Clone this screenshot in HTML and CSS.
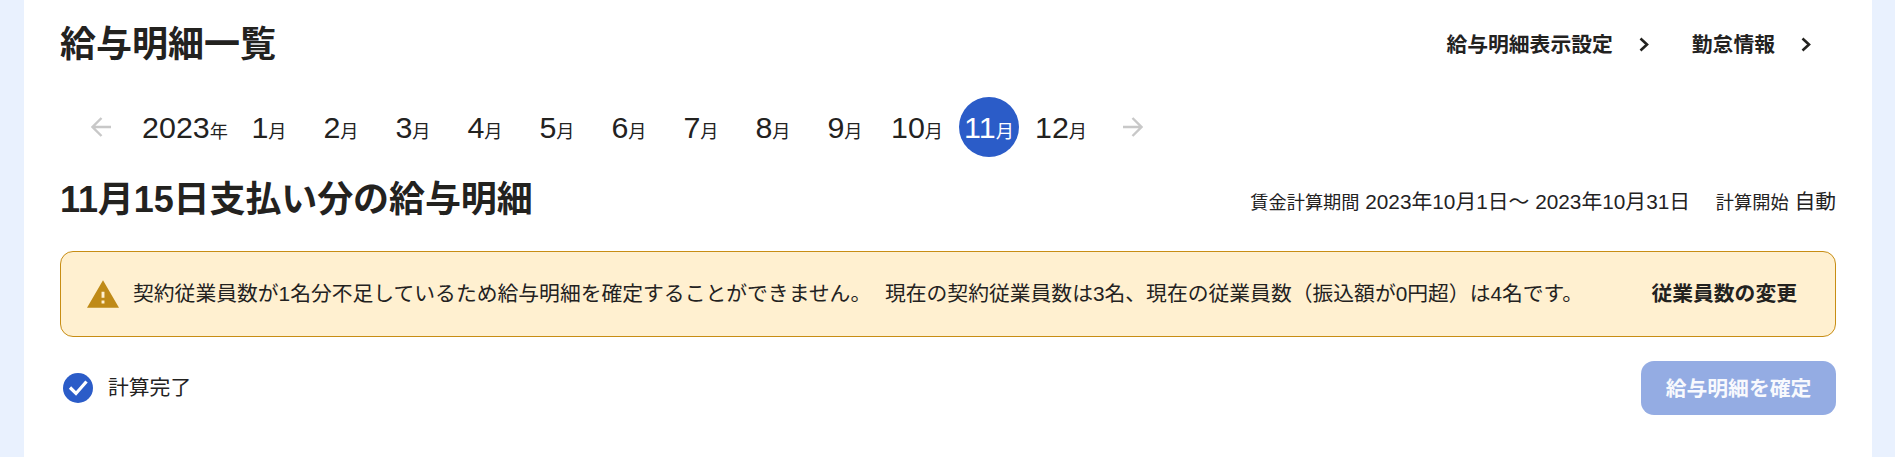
FILE: index.html
```html
<!DOCTYPE html>
<html lang="ja">
<head>
<meta charset="utf-8">
<title>給与明細一覧</title>
<link rel="stylesheet" href="styles.css">
</head>
<body>
<main class="panel">
  <header class="page-head">
    <h1 class="page-title">給与明細一覧</h1>
    <nav class="links">
      <a class="link">給与明細表示設定<svg class="chev" viewBox="0 0 10 15"><path d="M1.500 1.500 8 7.500l-6.500 6"/></svg></a>
      <a class="link">勤怠情報<svg class="chev" viewBox="0 0 10 15"><path d="M1.500 1.500 8 7.500l-6.500 6"/></svg></a>
    </nav>
  </header>
  <div class="months">
    <span class="cell"><svg class="arrow" viewBox="0 0 20 20"><path d="M20 10H1.500M10.500 1l-9 9 9 9"/></svg></span>
    <span class="year">2023<small>年</small></span>
    <span class="cell">1<small>月</small></span>
    <span class="cell">2<small>月</small></span>
    <span class="cell">3<small>月</small></span>
    <span class="cell">4<small>月</small></span>
    <span class="cell">5<small>月</small></span>
    <span class="cell">6<small>月</small></span>
    <span class="cell">7<small>月</small></span>
    <span class="cell">8<small>月</small></span>
    <span class="cell">9<small>月</small></span>
    <span class="cell">10<small>月</small></span>
    <span class="cell current">11<small>月</small></span>
    <span class="cell">12<small>月</small></span>
    <span class="cell"><svg class="arrow" viewBox="0 0 20 20"><path d="M0 10h18.500M9.500 1l9 9-9 9"/></svg></span>
  </div>
  <section class="summary">
    <h2 class="summary-title">11月15日支払い分の給与明細</h2>
    <p class="period">
      <small>賃金計算期間</small> 2023年10月1日～ 2023年10月31日
      <small class="start">計算開始</small> 自動
    </p>
  </section>
  <div class="alert">
    <svg class="warn" viewBox="1 2 22 19"><path d="M1 21h22L12 2 1 21zm12-3h-2v-2h2v2zm0-4h-2v-4h2v4z"/></svg>
    <p class="alert-text">契約従業員数が1名分不足しているため給与明細を確定することができません。 現在の契約従業員数は3名、現在の従業員数（振込額が0円超）は4名です。</p>
    <a class="alert-action">従業員数の変更</a>
  </div>
  <div class="status-row">
    <div class="status">
      <svg class="check" viewBox="0 0 30 30"><circle cx="15" cy="15" r="15"/><path d="m7 14.500 6 6L23.500 8.500"/></svg>
      <span class="status-label">計算完了</span>
    </div>
    <button class="confirm" type="button">給与明細を確定</button>
  </div>
</main>
</body>
</html>
```
FILE: styles.css
```css
* { box-sizing: border-box; }
html, body { margin: 0; height: 100%; }
body {
  background: #e9f1fe;
  color: #23221f;
  font-family: "Liberation Sans", "Noto Sans CJK JP", sans-serif;
  font-size: 20.8px;
  overflow: hidden;
}
.panel {
  margin: 0 23px 0 24px;
  height: 457px;
  background: #fff;
  padding: 0 36px;
}
.page-head {
  display: flex;
  justify-content: space-between;
  align-items: center;
  height: 90px;
}
.page-title { margin: 0; font-size: 36px; font-weight: 700; line-height: 1; }
.links { display: flex; gap: 43px; margin-right: 25px; }
.link {
  display: flex;
  align-items: center;
  gap: 26px;
  font-weight: 700;
  font-size: 20.8px;
  line-height: 1;
}
.chev { width: 10px; height: 15px; fill: none; stroke: #23221f; stroke-width: 2.6; }
.months {
  display: flex;
  gap: 12px;
  align-items: center;
  height: 60px;
  margin-top: 7px;
  padding-left: 11px;
  font-size: 30.4px;
}
.cell, .year {
  display: flex;
  justify-content: center;
  align-items: baseline;
  height: 60px;
  line-height: 60px;
  flex: none;
}
.cell { width: 60px; }
.year { width: 84px; }
.months small { font-size: 18.2px; }
.current { background: #2b5cc8; color: #fff; border-radius: 50%; }
.arrow {
  width: 20px;
  height: 20px;
  align-self: center;
  fill: none;
  stroke: #c8c8c8;
  stroke-width: 2.4;
}
.summary {
  display: flex;
  justify-content: space-between;
  align-items: center;
  height: 66px;
  margin-top: 10px;
}
.summary-title { margin: 0; font-size: 36px; font-weight: 700; line-height: 1; letter-spacing: -0.1px; }
.period { margin: 0; white-space: nowrap; }
.period small { font-size: 18.2px; }
.period .start { margin-left: 20px; }
.alert {
  display: flex;
  align-items: center;
  height: 86px;
  margin-top: 18px;
  padding: 0 38px 0 26px;
  background: #fff0d0;
  border: 1px solid #c78d14;
  border-radius: 13px;
}
.warn { width: 32px; height: 28px; flex: none; fill: #bf8a17; margin-right: 14px; }
.alert-text { margin: 0; flex: 1; white-space: nowrap; word-spacing: 8px; padding-bottom: 4px; }
.alert-action { font-weight: 700; padding-bottom: 4px; }
.status-row {
  display: flex;
  justify-content: space-between;
  align-items: center;
  margin-top: 24px;
}
.status { display: flex; align-items: center; gap: 15px; padding-left: 3px; }
.status-label { padding-bottom: 4px; }
.check { width: 30px; height: 30px; }
.check circle { fill: #2b5cc8; }
.check path { fill: none; stroke: #fff; stroke-width: 3.2; }
.confirm {
  width: 195px;
  height: 54px;
  padding: 0 0 2px;
  border: 0;
  border-radius: 13px;
  background: #94ace3;
  color: #f8f9fd;
  font: 700 20.8px "Liberation Sans", "Noto Sans CJK JP", sans-serif;
}
```
